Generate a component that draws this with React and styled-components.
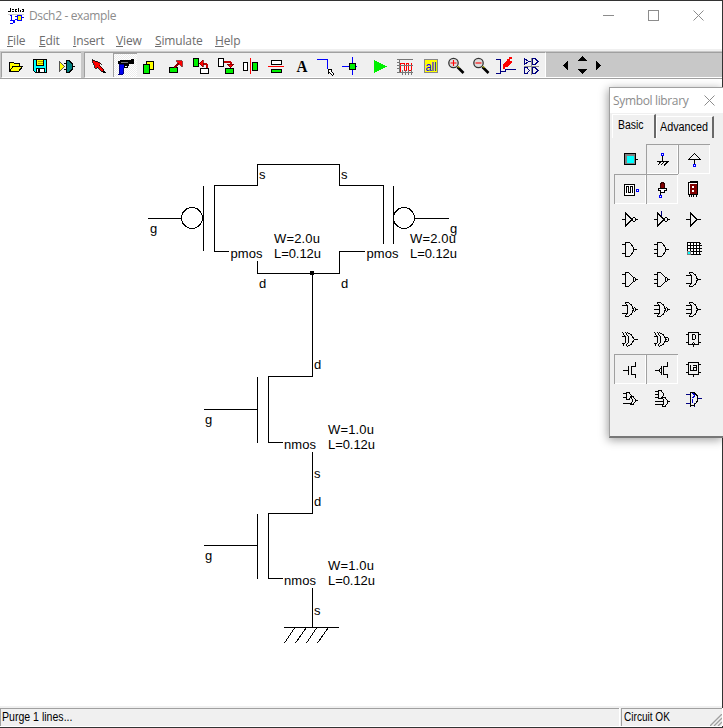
import React from "react";
import styled, { createGlobalStyle } from "styled-components";

const Global = createGlobalStyle`
  html, body { margin: 0; padding: 0; background: #fff; overflow: hidden; }
  * { box-sizing: border-box; }
  svg { display: block; }
`;

const Window = styled.div`
  width: 723px;
  height: 728px;
  display: flex;
  flex-direction: column;
  background: #fff;
  border: solid #333;
  border-width: 1px 1px 1px 0;
  position: relative;
`;
const TitleBar = styled.header`
  height: 31px;
  display: flex;
  align-items: center;
  padding: 0 18px 2px 8px;
  color: #8c8c8c;
  font: 12px "Open Sans", "Noto Sans", sans-serif;
`;
const Caption = styled.span`
  flex: 1;
  margin-left: ${(p) => p.$indent || 0}px;
  letter-spacing: -0.35px;
  white-space: nowrap;
`;
const Controls = styled.div`
  display: flex;
  gap: 34px;
`;
const MenuBar = styled.nav`
  height: 19px;
  display: flex;
  border-bottom: 2px solid #f0f0f0;
  color: #6d6d6d;
  font: 12px/18px "Open Sans", "Noto Sans", sans-serif;
  padding-left: 7px;
`;
const MenuItem = styled.span`
  width: ${(p) => p.$w}px;
  letter-spacing: -0.15px;
  white-space: nowrap;
  &::first-letter { text-decoration: underline; }
`;
const ToolRow = styled.div`
  height: 28px;
  display: flex;
  border-bottom: 1px solid #a0a0a0;
  background: #c8c8c8;
`;
const ToolGroup = styled.div`
  width: ${(p) => p.$w}px;
  display: flex;
  background: #f0f0f0;
  border: solid #a0a0a0;
  border-width: 1px 0 0 1px;
  border-bottom: 1px solid #fff;
  margin: 1px 0 0 ${(p) => p.$gap}px;
`;
const Tool = styled.button`
  width: ${(p) => p.$w}px;
  flex: none;
  display: flex;
  align-items: flex-start;
  padding: 0;
  border: 0;
  background: ${(p) => (p.$on ? "repeating-conic-gradient(#fff 0 25%, #ececec 0 50%) 0 0 / 2px 2px" : "none")};
  box-shadow: ${(p) => (p.$on ? "inset 1px 1px #a0a0a0" : "none")};
`;
const NavStrip = styled.div`
  flex: 1;
  margin-top: 1px;
  border: solid #a0a0a0;
  border-width: 1px 0 0;
  border-left: 1px solid #fff;
  border-bottom: 1px solid #fff;
`;
const Canvas = styled.main`
  flex: 1;
  min-height: 0;
  overflow: hidden;
  font-family: "Liberation Sans", Arial, sans-serif;
`;
const StatusBar = styled.footer`
  height: 21px;
  display: flex;
  gap: 2px;
  padding-top: 2px;
  background: #f0f0f0;
  border-bottom: 1px solid #fff;
`;
const StatusPane = styled.div`
  flex: ${(p) => (p.$w ? "none" : 1)};
  width: ${(p) => (p.$w ? p.$w + "px" : "auto")};
  border: solid #a0a0a0;
  border-width: 1px 0 0 1px;
  box-shadow: 1px 0 #fff;
  padding-left: ${(p) => (p.$w ? 2 : 1)}px;
  display: flex;
  justify-content: space-between;
  align-items: flex-end;
  font: 12px/18px "Liberation Sans", Arial, sans-serif;
  color: #000;
  white-space: nowrap;
`;
const Squeezed = styled.span`
  transform: scaleX(${(p) => p.$k});
  transform-origin: 0 50%;
  white-space: nowrap;
`;
const Palette = styled.aside`
  position: absolute;
  left: 609px;
  top: 86px;
  width: 114px;
  height: 351px;
  background: #f0f0f0;
  border: solid #a0a0a0;
  border-width: 1px 0 2px 1px;
  border-bottom-color: #777;
  box-shadow: -1px 2px 9px rgba(0, 0, 0, 0.38);
  clip-path: inset(-16px 0 -20px -20px);
`;
const PaletteTitle = styled.div`
  height: 25px;
  display: flex;
  align-items: center;
  background: #fff;
  color: #8c8c8c;
  font: 12px "Open Sans", "Noto Sans", sans-serif;
  padding: 0 8px 1px 3px;
`;
const Tabs = styled.div`
  height: 25px;
  display: flex;
  align-items: flex-end;
  padding-left: 2px;
  font: 12px "Liberation Sans", Arial, sans-serif;
`;
const Tab = styled.div`
  width: ${(p) => p.$w}px;
  height: ${(p) => (p.$on ? 24 : 22)}px;
  line-height: ${(p) => (p.$on ? 20 : 21)}px;
  padding-left: ${(p) => (p.$on ? 5 : 3)}px;
  border: solid #fff;
  border-width: 1px 0 0 1px;
  border-right: 2px solid #696969;
  white-space: nowrap;
  display: flex;
`;
const SymbolGrid = styled.div`
  display: grid;
  grid-template-columns: repeat(3, 32px);
  grid-auto-rows: 30px;
  padding: 6px 0 0 4px;
`;
const SymbolCell = styled.div`
  box-shadow: ${(p) => (p.$framed ? "inset 1px 1px #a0a0a0, inset -1px -1px #fff" : "none")};
`;

const B = "#000";
const N = "#000080";
const G = "#00f000";

const Line = ({ d, c = B, w = 1, f = "none" }) => (
  <path d={d} stroke={c} strokeWidth={w} fill={f} />
);

const ArrowHead = ({ d }) => <path d={d} fill="#f00" stroke="#600000" strokeWidth="0.7" />;

const tools = [
  { w: 26, art: <g><Line d="M9.500 71.500V62.500H13.500L14.500 63.500H19.500V66.500" f="#ff0" /><path d="M9.500 71.500L13 66.500H22.500L18.500 71.500Z" fill="#ff0" stroke="#000" /></g> },
  { w: 26, art: <g><path d="M33.500 59.500H46.500V72.500H35.500L33.500 70.500Z" fill="#0ff" stroke="#000" /><path d="M36.500 59.500H43.500V65.500H36.500Z" fill="#ff0" stroke="#000" /><Line d="M38 61.500H43M38 63.500H43" c="#a0a000" /><path d="M36.500 68.500H44.500V72.500H36.500Z" fill="#fff" stroke="#000" /><path d="M38 69h2v3h-2z" /></g> },
  { w: 27, art: <g><path d="M59.500 61.500V71.500L64.500 66.500Z" fill="#ff0" stroke="#555" /><path d="M66.500 60.500H69L72.500 64V69L69 72.500H66.500Z" fill="#008080" stroke="#000" /><Line d="M64 63.500H67M64 69.500H67M73 66.500H75" /></g> },
];

const editTools = [
  { w: 28, art: <g><Line d="M95 62L105 73" w={2.4} /><path d="M92 59.500L101 63.500L99.500 65L104 70L102 72L97.500 67L96 69Z" fill="#f00" stroke="#000" strokeWidth="0.8" /></g> },
  { w: 24, on: true, art: <g><path d="M119.500 64.500H124.500L123 74.500H119Z" fill="#0000f0" stroke="#000080" /><path d="M118 61h2v-1h11v-1h3v5h-5v2h-4v-1h-1v-1h-6z" /><Line d="M121 62.500H128" c="#777" /><Line d="M124.500 64V67.500H127.500V65" /></g> },
  { w: 25, art: <g><path d="M146.500 61.500H153.500V69.500H146.500Z" fill="#ff0" stroke="#000" /><path d="M143.500 64.500H149.500V73.500H143.500Z" fill={G} stroke="#000" /></g> },
  { w: 25, art: <g><path d="M169.500 67.500H177.500V72.500H169.500Z" fill={G} stroke="#000" /><Line d="M174 68L179 63" c="#900000" w={2.2} /><ArrowHead d="M176 60.500H182V66.500L180 65L177.500 62Z" /></g> },
  { w: 25, art: <g><path d="M193.500 58.500H198.500V66.500H193.500Z" fill={G} stroke="#000" /><path d="M200.500 68.500H208.500V73.500H200.500Z" fill="#fff" stroke="#000" /><Line d="M202 63.500H205.500L206.500 64.500V68" c="#c00000" w={2} /><ArrowHead d="M199 63.500L203 60V67Z" /></g> },
  { w: 25, art: <g><path d="M218.500 58.500H223.500V66.500H218.500Z" fill="#fff" stroke="#000" /><path d="M225.500 68.500H233.500V73.500H225.500Z" fill={G} stroke="#000" /><Line d="M224 61.500H229.500L230.500 62.500V65" c="#c00000" w={2} /><ArrowHead d="M227 64H234L230.500 68Z" /></g> },
  { w: 25, art: <g><path d="M243.500 62.500H247.500V70.500H243.500Z" fill="#fff" stroke="#000" /><path d="M252.500 62.500H257.500V70.500H252.500Z" fill={G} stroke="#000" /><Line d="M250.500 58V74" c="#f00" /></g> },
  { w: 25, art: <g><path d="M271.500 60.500H281.500V64.500H271.500Z" fill="#fff" stroke="#000" /><path d="M271.500 69.500H281.500V72.500H271.500Z" fill={G} stroke="#000" /><Line d="M268 66.500H284" c="#f00" /></g> },
  { w: 25, art: <text x="296.500" y="72" fontFamily="Liberation Serif" fontWeight="bold" fontSize="16" textLength="11" lengthAdjust="spacingAndGlyphs">A</text> },
  { w: 25, art: <g><Line d="M317 59.500H327.500V69" c="#00f" /><path d="M328 69.500H331.500L331 71L334 74L332.500 75.500L329.500 72.500L328 73.500Z" fill="#fff" stroke="#000" /></g> },
  { w: 25, art: <g><Line d="M342 66.500H357M352.500 57V75" c="#00f" /><path d="M349.500 63.500H355.500V69.500H349.500Z" fill={G} stroke="#000" /></g> },
  { w: 25, art: <path d="M374 60L387 66.500L374 73Z" fill={G} /> },
  { w: 25, art: <g><Line d="M400.500 72V63.500H404.500V70.500H406.500V63.500H408.500V70.500H411.500V63" c="#f00" /><Line d="M399.500 59V73M397 59.500H413M397 62.500H400M397 65.500H413M397 68.500H400M397 72.500H413M402.500 70V75M405.500 70V75M408.500 70V75M411.500 70V75" c="#777" /></g> },
  { w: 25, art: <g><path d="M424.500 59.500H437.500V72.500H424.500Z" fill="#ff0" stroke="#888" /><text x="425.500" y="71" fontFamily="Liberation Sans" fontSize="13" textLength="11" lengthAdjust="spacingAndGlyphs" fill="#00f">all</text></g> },
  ...[453.5, 478.5].map((x, i) => ({
    w: 25,
    art: <g shapeRendering="auto"><Line d={`M${x + 4} 67L${x + 10} 73`} w={2.6} /><circle cx={x} cy="63" r="4.700" fill="#ddd" stroke="#333" strokeWidth="1.300" /><path d={`M${x + 4} 66l2 2`} stroke="#dd0" /><Line d={`M${x - 3} 63H${x + 3}` + (i ? "" : `M${x} 60V66`)} c="#f00" w={1.1} /></g>,
  })),
  { w: 25, art: <g><Line d="M496 59.500H500.500V73.500H496M500 71.500H505.500V69.500H516" c={N} /><path d="M509 57h3v2h-2v2h2v1l-5 5h-2v2h-2v-5l3-3h1v-2h2z" fill="#f00" /></g> },
  { w: 25, art: <g><Line d="M524.500 58.500V64.500L528.500 61.500ZM528 61.500H531M532.500 58.500V64.500H535L538 61.500L535 58.500ZM524.500 67.500V73.500H527L529.500 70.500L527 67.500ZM532.500 67.500V73.500H535L538 70.500L535 67.500Z" c={N} /><Line d="M531.500 58V75M524 66.500H539" c="#888" /></g> },
];

function Tools({ items, start }) {
  let x = start;
  return items.map((t, i) => {
    const left = x;
    x += t.w;
    return (
      <Tool key={i} $w={t.w} $on={t.on}>
        <svg width={t.w} height="23" viewBox={`${left} 53 ${t.w} 23`} overflow="visible" shapeRendering="crispEdges">
          {t.art}
        </svg>
      </Tool>
    );
  });
}

const Pin = ({ x, y }) => <path d={`M${x}.5 ${y}.500h2v2h-2z`} fill="#fff" stroke="#00f" />;
const Tri = ({ bubble }) => (
  <g>
    <Line d={bubble ? "M8 15.500H11M11.500 8V23M12 9.500L18 15.500L12 21.500M22 15.500H24" : "M8 15.500H12M12.500 8V23M13 9.500L19 15.500L13 21.500M19 15.500H23"} />
    {bubble && <Line d="M19 13.500h2M18.500 14v3M21.500 14v3M19 17.500h2" />}
  </g>
);
const Bubble = () => <Line d="M19.500 14V17M21.500 14V17M20 13.500H21M20 17.500H21M22 15.500H24" />;
const And = ({ three, bubble }) => (
  <g>
    <Line d={`M8 10.500H11M8 19.500H11${three ? "M8 15.500H11" : ""}`} />
    <Line d={bubble ? "M11.500 8.500V22.500H14.500L19 18V13L14.500 8.500Z" : "M11.500 8.500V22.500H15.500L17.500 20.500L19.500 17V14L17.500 10.500L15.500 8.500Z"} />
    {bubble ? <Bubble /> : <Line d="M20 15.500H23" />}
  </g>
);
const Or = ({ three, bubble }) => (
  <g>
    <Line d={`M8 11.500H13M8 19.500H13${three ? "M8 15.500H14" : ""}`} />
    <Line d="M10.500 8.500H14.500L17.500 11L19.500 15.500L17.500 20L14.500 22.500H10.500M11.500 9L13.500 12V19L11.500 22" />
    {bubble ? <Bubble /> : <Line d="M20 15.500H23" />}
  </g>
);
const Xor = ({ bubble }) => (
  <g>
    <Line d="M8 12.500H11M8 19.500H11M8.500 8.500L11.500 13V18L8.500 22.500M11.500 8.500L14.500 13V18L11.500 22.500M13 8.500L17 10.500L20.500 15.500L17 20.500L13 22.500" />
    {bubble ? <Line d="M20 13.500h2M19.500 14v3M22.500 14v3M20 17.500h2" /> : <Line d="M20 15.500H24" />}
  </g>
);
const ChipBox = ({ children }) => (
  <g>
    <path d="M10.500 8.500H20.500V20.500H10.500Z" fill="none" stroke="#000" />
    <Line d="M8 10.500H10M8 18.500H10M21 10.500H23M21 18.500H23M15.500 21V23" />
    {children}
  </g>
);
const Mos = ({ p }) => (
  <Line d={(p ? "M9 16.500H12M13.500 15V18M12.500 16V17" : "M9 16.500H14") + (p ? "M15.500 12V21M14 14.500H15M14 18.500H15" : "M14.500 12V21") + "M21.500 8V13M18 12.500H22M17.500 12V21M18 20.500H22M21.500 20V24"} />
);
const MiniGates = ({ wide }) => (
  <g>
    <Line d={wide ? "M9 7.500H13M9 10.500H13M9 13.500H13M9 17.500H17M9 20.500H17M12.500 6.500V14.500H15L17 12V9L15 6.500ZM16.500 13.500H19L21.500 16.500V19L19 22.500H16.500L17.500 20V16ZM22 17.500H24" : "M9 9.500H13M9 13.500H13M9 19.500H17M12.500 8.500V15.500H15L17 13V11L15 8.500ZM16.500 12.500H19L21.500 15.500V17L19 20.500H16.500L18 18V15ZM22 16.500H24"} />
  </g>
);

const symbols = [
  { art: <g><path d="M10.500 9.500H21.500V20.500H10.500Z" fill="#808080" stroke="#000" /><path d="M13 12h7v7h-7z" fill="#0ff" /><Line d="M22 15.500h2" /></g> },
  { framed: true, art: <g><Line d="M16.500 12V17M11 17.500H23M14.500 18L11.500 21.500M18 18L14.500 21.500M21.500 18L18 21.500" /><Pin x={15} y={9} /></g> },
  { framed: true, art: <g><Line d="M16.500 9.500L10.500 15.500H22.500ZM16.500 16V20" /><Pin x={15} y={20} /></g> },
  { framed: true, art: <g><path d="M10.500 10.500H20.500V21.500H10.500Z" fill="#fff" stroke="#000" /><Line d="M12 18.500H12.500V12.500H14.500V18.500H16.500V12.500H18.500V19" /><Pin x={22} y={15} /></g> },
  { framed: true, art: <g><path d="M14.500 14V10.500L15.500 8.500H17.500L18.500 10.500V14Z" fill="#800000" stroke="#300" /><path d="M12.500 14.500H20.500V16.500H18.500V18.500H14.500V16.500H12.500Z" fill="#fff" stroke="#000" /><Line d="M14.500 18V21" /><Pin x={13} y={21} /></g> },
  { art: <g><path d="M10.500 8.500H19.500V20.500H10.500Z" fill="#fff" stroke="#000" /><path d="M12 10h7v10h-7z" fill="#800000" /><path d="M14 12h2v2h-2zM14 16h2v2h-2z" fill="#fff" /><Line d="M12 7.500H20M11.500 21v2M13.500 21v2M15.500 21v2M18.500 21v2" /></g> },
  { art: <Tri bubble /> },
  { art: <g><Tri bubble /><Line d="M15.500 7V12" c={N} /></g> },
  { art: <Tri /> },
  { art: <And /> },
  { art: <And three /> },
  { art: <g><path d="M9.500 8.500H21.500V20.500H9.500Z" fill="#fff" stroke="#000" /><Line d="M12.500 8V21M15.500 8V21M18.500 8V21M9 11.500H24M9 14.500H24M9 17.500H24M21 9.500H23M21 20.500H23" /><path d="M9 17h4v4h-4z" fill="#808080" /><path d="M10 18h2v2h-2z" fill="#0ff" /></g> },
  { art: <And bubble /> },
  { art: <And bubble three /> },
  { art: <Or /> },
  { art: <Or bubble /> },
  { art: <Or bubble three /> },
  { art: <Or three /> },
  { art: <Xor /> },
  { art: <Xor bubble /> },
  { art: <ChipBox><Line d="M13.500 10.500H16.500L17.500 11.500V14.500L16.500 15.500H13.500M14.500 10V16M13.500 20.500L15.500 18.500L17.500 20.500" /></ChipBox> },
  { framed: true, art: <Mos /> },
  { framed: true, art: <Mos p /> },
  { art: <ChipBox><Line d="M12.500 11V16.500H14.500M15 11.500H18.500V17M18 13.500H16L15.500 16.500H18" /></ChipBox> },
  { art: <MiniGates /> },
  { art: <MiniGates wide /> },
  { art: <g><Line d="M8 10.500H12M8 19.500H12M20 14.500H24M16.500 19V23" c={N} /><Line d="M12.500 7.500V22.500M13 8.500H16L19.500 12V17L16 21.500H13" /><Line d="M14.500 9.500l2 1v2l-2 1M14.500 15v4" c="#00c" /></g> },
];

const labels = [
  [150, 233, "g"], [259, 179, "s"], [341, 179, "s"], [259, 288, "d"], [341, 288, "d"], [450, 233, "g"],
  [230.5, 258, "pmos"], [366.5, 258, "pmos"],
  [274, 243, "W=2.0u"], [274, 258, "L=0.12u"], [410, 243, "W=2.0u"], [410, 258, "L=0.12u"],
  [314, 369, "d"], [205, 424, "g"], [284, 449, "nmos"], [328, 434, "W=1.0u"], [328, 449, "L=0.12u"], [314, 478, "s"],
  [314, 506, "d"], [205, 560, "g"], [284, 585, "nmos"], [328, 570, "W=1.0u"], [328, 585, "L=0.12u"], [314, 615, "s"],
];
const widths = { pmos: 32, nmos: 32, "W=2.0u": 46, "W=1.0u": 46, "L=0.12u": 47 };

function Schematic() {
  return (
    <svg width="722" height="627" viewBox="0 79 722 627" shapeRendering="crispEdges">
      <Line d="M214 185.500H257.500V164.500H339.500V185.500H383.500V244M203.500 186V251M214.500 185V251.500H229M257.500 261V273.500H339.500V251.500H365M393.500 186V244M148 218.500H181M415 218.500H449" />
      <circle cx="192" cy="218" r="10.500" fill="none" stroke="#000" />
      <circle cx="404" cy="218" r="10.500" fill="none" stroke="#000" />
      <path d="M310 271h4v4h-4z" />
      <Line d="M312.500 273V376.500H268M257.500 377V443M268.500 377V442.500H283M204 409.500H257M312.500 452V513.500H268M257.500 514V579M268.500 514V578.500H283M204 545.500H257M312.500 588V627M284 627.500H339M294.500 628L284.500 643M306 628L295.500 643M316.500 628L306.500 643M328 628L317.500 643" />
      {labels.map(([x, y, t], i) => (
        <text key={i} x={x} y={y} fontSize="13" textLength={widths[t]}>{t}</text>
      ))}
    </svg>
  );
}

const AppIcon = () => (
  <svg width="16" height="16" viewBox="0 0 16 16" shapeRendering="crispEdges">
    <Line d="M0 3.500H3M2.500 0V4M4 1.500H6M4 3.500H6M7 1.500V3.500M7 1.500H9M7 3.500H9M10.500 0V4M12.500 2V4M14 1.500H15V3.500H14" />
    <Line d="M0 6.500H16" c="#ccc" />
    <Line d="M3.500 7V12M2 7.500H4M2 12.500H6" c="#00f" />
    <path d="M9.500 7.500H13.500V12.500H9.500Z" fill="#ff0" stroke="#00f" />
    <Line d="M7 8.500H9M7 11.500H9M14 9.500H16M2 15.500H5" c="#00f" />
    <path d="M5 12h2v3h-2z" fill="#00f" />
  </svg>
);
const Cross = ({ c = "#8c8c8c" }) => (
  <svg width="11" height="11" viewBox="0 0 11 11"><Line d="M.5 .5L10.500 10.500M10.500 .5L.5 10.500" c={c} /></svg>
);

export default function App() {
  return (
    <>
      <Global />
      <Window>
        <TitleBar>
          <AppIcon />
          <Caption $indent={5}>Dsch2 - example</Caption>
          <Controls>
            <svg width="11" height="11" shapeRendering="crispEdges"><Line d="M0 5.500H11" c="#8c8c8c" /></svg>
            <svg width="11" height="11" shapeRendering="crispEdges"><Line d="M.5 .5H10.500V10.500H.5Z" c="#8c8c8c" /></svg>
            <Cross />
          </Controls>
        </TitleBar>
        <MenuBar>
          <MenuItem $w={32}>File</MenuItem>
          <MenuItem $w={34}>Edit</MenuItem>
          <MenuItem $w={43}>Insert</MenuItem>
          <MenuItem $w={39}>View</MenuItem>
          <MenuItem $w={60}>Simulate</MenuItem>
          <MenuItem $w={40}>Help</MenuItem>
        </MenuBar>
        <ToolRow>
          <ToolGroup $w={80} $gap={1}><Tools items={tools} start={2} /></ToolGroup>
          <ToolGroup $w={461} $gap={3}><Tools items={editTools} start={85} /></ToolGroup>
          <NavStrip>
            <svg width="100" height="23" viewBox="546 53 100 23" shapeRendering="crispEdges">
              <path d="M563 65.500L568 60.500V70.500ZM577 61L582.500 56L588 61ZM577 69H588L582.500 74ZM596 60.500L601 65.500L596 70.500Z" />
            </svg>
          </NavStrip>
        </ToolRow>
        <Canvas><Schematic /></Canvas>
        <StatusBar>
          <StatusPane><Squeezed $k={0.88}>Purge 1 lines...</Squeezed></StatusPane>
          <StatusPane $w={101}>
            <Squeezed $k={0.84}>Circuit OK</Squeezed>
            <svg width="12" height="12"><Line d="M0 12L12 0M4 12L12 4M8 12L12 8" c="#a0a0a0" w={1.3} /></svg>
          </StatusPane>
        </StatusBar>
        <Palette>
          <PaletteTitle><Caption>Symbol library</Caption><Cross /></PaletteTitle>
          <Tabs>
            <Tab $w={44} $on><Squeezed $k={0.87}>Basic</Squeezed></Tab>
            <Tab $w={58}><Squeezed $k={0.9}>Advanced</Squeezed></Tab>
          </Tabs>
          <SymbolGrid>
            {symbols.map((s, i) => (
              <SymbolCell key={i} $framed={s.framed}>
                <svg width="32" height="30" shapeRendering="crispEdges">{s.art}</svg>
              </SymbolCell>
            ))}
          </SymbolGrid>
        </Palette>
      </Window>
    </>
  );
}
